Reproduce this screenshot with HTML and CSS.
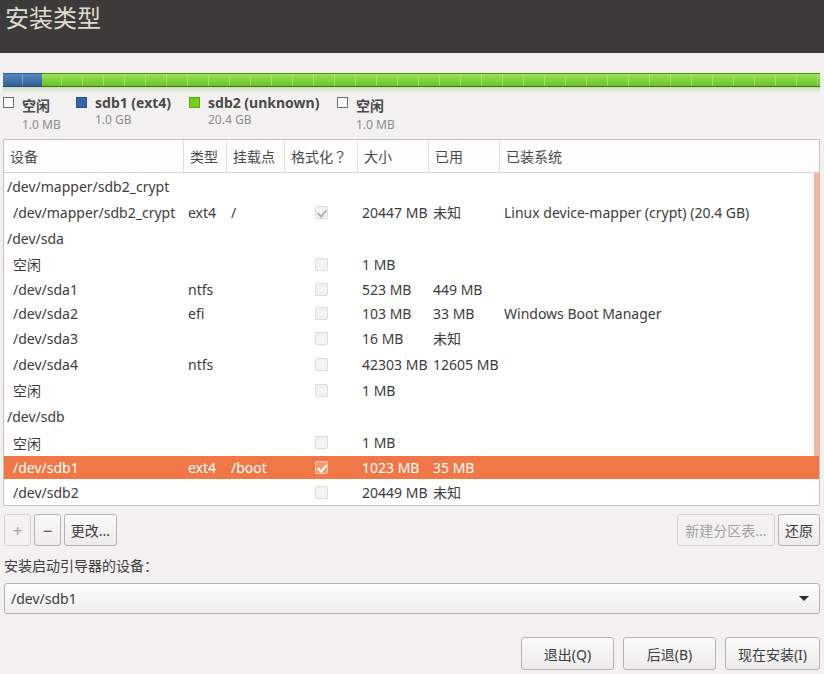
FILE: index.html
```html
<!DOCTYPE html>
<html lang="zh-CN">
<head>
<meta charset="utf-8">
<title>安装类型</title>
<link rel="stylesheet" href="styles.css">
</head>
<body>
<header class="titlebar"><h1 class="title">安装类型</h1></header>
<main class="content">
  <div class="partbar">
    <div class="seg seg-blue"></div>
    <div class="seg seg-green"></div>
  </div>
  <div class="legend">
    <div class="legend-item">
      <span class="swatch swatch-free"></span>
      <div class="legend-text legend-text-free"><div class="legend-name">空闲</div><div class="legend-size">1.0 MB</div></div>
    </div>
    <div class="legend-item">
      <span class="swatch swatch-blue"></span>
      <div class="legend-text"><div class="legend-name">sdb1 (ext4)</div><div class="legend-size">1.0 GB</div></div>
    </div>
    <div class="legend-item">
      <span class="swatch swatch-green"></span>
      <div class="legend-text"><div class="legend-name">sdb2 (unknown)</div><div class="legend-size">20.4 GB</div></div>
    </div>
    <div class="legend-item">
      <span class="swatch swatch-free"></span>
      <div class="legend-text legend-text-free"><div class="legend-name">空闲</div><div class="legend-size">1.0 MB</div></div>
    </div>
  </div>

  <div class="table">
    <div class="row head">
      <div class="hc">设备</div><div class="hc">类型</div><div class="hc">挂载点</div><div class="hc">格式化<span class="fw">？</span></div><div class="hc">大小</div><div class="hc">已用</div><div class="hc last">已装系统</div>
    </div>
    <div class="tbody">
      <div class="row r26"><div class="c dev">/dev/mapper/sdb2_crypt</div><div class="c"></div><div class="c"></div><div class="c cb"></div><div class="c"></div><div class="c"></div><div class="c"></div></div>
      <div class="row r26"><div class="c dev child">/dev/mapper/sdb2_crypt</div><div class="c">ext4</div><div class="c">/</div><div class="c cb"><span class="check checked"></span></div><div class="c">20447 MB</div><div class="c">未知</div><div class="c">Linux device-mapper (crypt) (20.4 GB)</div></div>
      <div class="row r26"><div class="c dev">/dev/sda</div><div class="c"></div><div class="c"></div><div class="c cb"></div><div class="c"></div><div class="c"></div><div class="c"></div></div>
      <div class="row r26"><div class="c dev child">空闲</div><div class="c"></div><div class="c"></div><div class="c cb"><span class="check"></span></div><div class="c">1 MB</div><div class="c"></div><div class="c"></div></div>
      <div class="row r24"><div class="c dev child">/dev/sda1</div><div class="c">ntfs</div><div class="c"></div><div class="c cb"><span class="check"></span></div><div class="c">523 MB</div><div class="c">449 MB</div><div class="c"></div></div>
      <div class="row r24"><div class="c dev child">/dev/sda2</div><div class="c">efi</div><div class="c"></div><div class="c cb"><span class="check"></span></div><div class="c">103 MB</div><div class="c">33 MB</div><div class="c">Windows Boot Manager</div></div>
      <div class="row r26"><div class="c dev child">/dev/sda3</div><div class="c"></div><div class="c"></div><div class="c cb"><span class="check"></span></div><div class="c">16 MB</div><div class="c">未知</div><div class="c"></div></div>
      <div class="row r26"><div class="c dev child">/dev/sda4</div><div class="c">ntfs</div><div class="c"></div><div class="c cb"><span class="check"></span></div><div class="c">42303 MB</div><div class="c">12605 MB</div><div class="c"></div></div>
      <div class="row r26"><div class="c dev child">空闲</div><div class="c"></div><div class="c"></div><div class="c cb"><span class="check"></span></div><div class="c">1 MB</div><div class="c"></div><div class="c"></div></div>
      <div class="row r26"><div class="c dev">/dev/sdb</div><div class="c"></div><div class="c"></div><div class="c cb"></div><div class="c"></div><div class="c"></div><div class="c"></div></div>
      <div class="row r27"><div class="c dev child">空闲</div><div class="c"></div><div class="c"></div><div class="c cb"><span class="check"></span></div><div class="c">1 MB</div><div class="c"></div><div class="c"></div></div>
      <div class="row r23 selected"><div class="c dev child">/dev/sdb1</div><div class="c">ext4</div><div class="c">/boot</div><div class="c cb"><span class="check checked"></span></div><div class="c">1023 MB</div><div class="c">35 MB</div><div class="c"></div></div>
      <div class="row r26"><div class="c dev child">/dev/sdb2</div><div class="c"></div><div class="c"></div><div class="c cb"><span class="check"></span></div><div class="c">20449 MB</div><div class="c">未知</div><div class="c"></div></div>
      <div class="scroll-thumb"></div>
    </div>
  </div>

  <div class="toolbar">
    <div class="tool-left">
      <button class="btn btn-icon" disabled>+</button>
      <button class="btn btn-icon">−</button>
      <button class="btn">更改...</button>
    </div>
    <div class="tool-right">
      <button class="btn" disabled>新建分区表...</button>
      <button class="btn">还原</button>
    </div>
  </div>

  <div class="boot-label">安装启动引导器的设备：</div>
  <div class="combo"><span>/dev/sdb1</span><span class="arrow"></span></div>

  <div class="actions">
    <button class="btn btn-action">退出(Q)</button>
    <button class="btn btn-action">后退(B)</button>
    <button class="btn btn-action">现在安装(I)</button>
  </div>
</main>
</body>
</html>
```
FILE: styles.css
```css
* { box-sizing: border-box; }
html, body { margin: 0; padding: 0; }
body {
  width: 824px;
  height: 674px;
  overflow: hidden;
  background: #f2f1f0;
  font-family: "Noto Sans", "Noto Sans CJK SC", sans-serif;
  font-size: 14px;
  color: #3c3c3c;
}
.titlebar {
  height: 53px;
  background: #3c3b37;
  padding: 0 0 0 5px;
}
.title {
  margin: 0;
  font-family: "Noto Sans CJK SC", sans-serif;
  font-weight: 400;
  font-size: 24px;
  line-height: 34px;
  color: #dfdbd2;
}
.content {
  padding: 20px 4px 0 3px;
}
.partbar {
  display: flex;
  height: 14px;
  width: 817px;
  position: relative;
}
.partbar::after {
  content: "";
  position: absolute;
  left: 0; right: 0; top: 14px; height: 6px;
  background: linear-gradient(to bottom, rgba(120,180,90,0.35), rgba(242,241,240,0));
}
.seg { height: 14px; border: 1px solid; border-left: none; border-right: none; }
.seg-blue {
  width: 39px;
  border-color: #2f5c93 #2f5c93 #264a78;
  background:
    repeating-linear-gradient(to right, transparent 0 19px, rgba(255,255,255,0.25) 19px 20px),
    linear-gradient(to bottom, #5a88c0, #3f6ea8 60%, #355f95);
}
.seg-green {
  flex: 1;
  border-color: #4e9a06 #4e9a06 #3f7d05;
  background:
    repeating-linear-gradient(to right, transparent 0 20px, rgba(255,255,255,0.3) 20px 21px),
    linear-gradient(to bottom, #9ae25a, #7fd23c 55%, #6cbc2c);
  background-position: -1px 0, 0 0;
}
.legend {
  display: flex;
  margin-top: 9px;
  height: 38px;
}
.legend-item { display: flex; align-items: flex-start; }
.legend-item:nth-child(1) { width: 73px; }
.legend-item:nth-child(2) { width: 113px; }
.legend-item:nth-child(3) { width: 148px; }
.swatch {
  width: 11px; height: 11px;
  margin-top: 1px;
  margin-right: 8px;
  flex: none;
}
.swatch-free { border: 1px solid #6d6d6d; background: #fff; }
.swatch-blue { background: #3465a4; border: 1px solid #2a5288; }
.swatch-green { background: #73d216; border: 1px solid #5aa611; }
.legend-text { margin-top: -2px; }
.legend-name { font-weight: 700; font-size: 14px; line-height: 17px; color: #4a4a4a; }
.legend-size { font-size: 12px; line-height: 14px; color: #8c8c8c; margin-top: 2px; }
.legend-text-free { padding-top: 3px; }
.legend-text-free .legend-size { margin-top: 4px; }

.table {
  margin-top: 5px;
  width: 817px;
  border: 1px solid #c4c2bd;
  background: #fff;
}
.row {
  display: grid;
  grid-template-columns: 180px 43px 58px 73px 71px 71px 1fr;
  align-items: center;
  white-space: nowrap;
}
.head {
  height: 33px;
  background: linear-gradient(to bottom, #fff, #fbfbfb);
  border-bottom: 1px solid #d8d6d3;
}
.hc {
  height: 100%;
  display: flex;
  align-items: center;
  padding-left: 6px;
  border-right: 1px solid #e2e0dd;
  color: #4a4a4a;
  font-family: "Noto Sans CJK SC", sans-serif;
}
.hc .fw { font-family: "Noto Sans CJK JP", sans-serif; }
.hc.last { border-right: none; }
.tbody { position: relative; }
.r23 { height: 23px; }
.r24 { height: 24px; }
.r26 { height: 26px; }
.r27 { height: 27px; }
.c { padding-left: 4px; overflow: visible; color: #3c3c3c; }
.c.dev { padding-left: 3px; }
.c.dev.child { padding-left: 9px; }
.c.cb { display: flex; justify-content: center; padding-left: 0; }
.check {
  width: 13px; height: 13px;
  border: 1px solid #dcdcdc;
  border-radius: 2px;
  background: #f3f3f3;
  position: relative;
}
.check.checked::after {
  content: "";
  position: absolute;
  left: 3px; top: 1px;
  width: 4px; height: 7px;
  border: solid #b3b3b3;
  border-width: 0 2px 2px 0;
  transform: rotate(40deg);
}
.selected { background: #f07746; position: relative; z-index: 2; }
.selected .c { color: #fff; }
.selected .check { background: rgba(255,255,255,0.25); border-color: rgba(255,255,255,0.45); }
.selected .check.checked::after { border-color: #fff; }
.scroll-thumb {
  position: absolute;
  right: 0; top: 0;
  width: 5px; height: 283px;
  background: #f5b49b;
  z-index: 1;
}

.btn {
  font-family: "Noto Sans", "Noto Sans CJK SC", sans-serif;
  font-size: 14px;
  color: #3c3c3c;
  height: 32px;
  padding: 0 5px;
  border: 1px solid #b5b3ae;
  border-radius: 3px;
  background: linear-gradient(to bottom, #fbfbfa, #ecebea);
  box-shadow: inset 0 1px 0 #fff;
}
.btn:disabled {
  color: #a3a3a3;
  border-color: #d3d1cd;
  background: #f2f1f0;
  box-shadow: none;
}
.btn-icon { width: 27px; padding: 0; font-size: 17px; }
.toolbar {
  display: flex;
  justify-content: space-between;
  margin-top: 8px;
  padding-left: 1px;
}
.tool-left, .tool-right { display: flex; gap: 3px; }
.tool-left .btn:nth-child(2) { width: 27px; }
.tool-left .btn:nth-child(3) { width: 53px; padding: 0; }
.tool-right .btn:nth-child(1) { width: 98px; padding: 0; }
.tool-right .btn:nth-child(2) { width: 42px; padding: 0; }
.boot-label {
  margin-top: 11px;
  padding-left: 1px;
  line-height: 18px;
  color: #3c3c3c;
}
.combo {
  margin-top: 8px;
  margin-left: 1px;
  height: 31px;
  width: 816px;
  border: 1px solid #b5b3ae;
  border-radius: 3px;
  background: linear-gradient(to bottom, #fdfdfd, #efeeed);
  display: flex;
  align-items: center;
  justify-content: space-between;
  padding: 0 10px 0 6px;
}
.arrow {
  width: 0; height: 0;
  border-left: 5px solid transparent;
  border-right: 5px solid transparent;
  border-top: 5px solid #2e2e2e;
}
.actions {
  display: flex;
  justify-content: flex-end;
  gap: 9px;
  margin-top: 23px;
}
.btn-action { width: 93px; height: 33px; padding: 0; }
.btn-action:last-child { width: 95px; }
```
